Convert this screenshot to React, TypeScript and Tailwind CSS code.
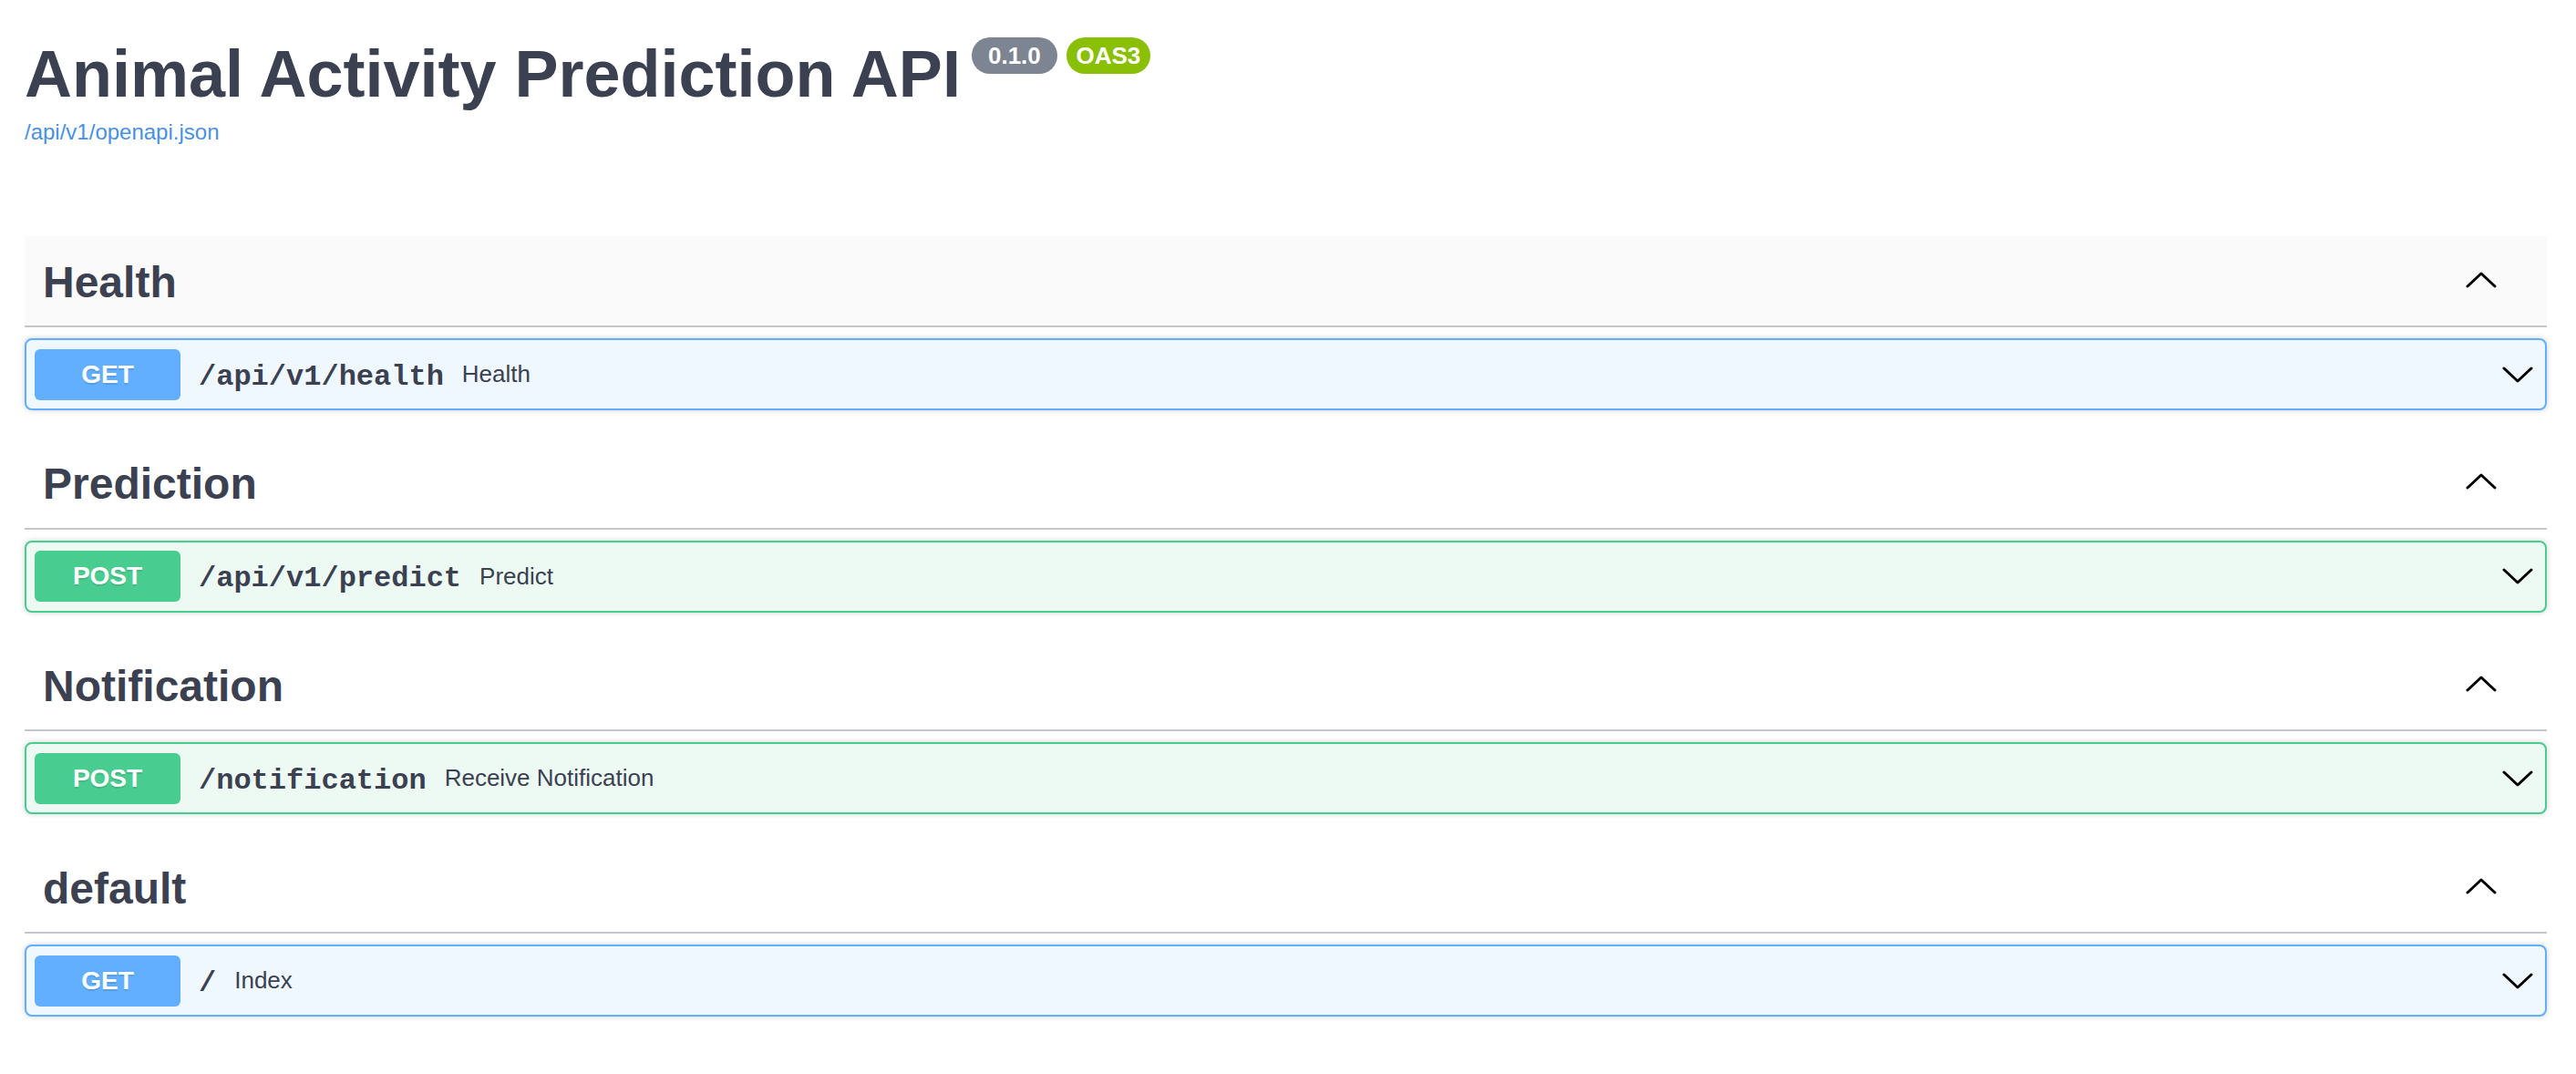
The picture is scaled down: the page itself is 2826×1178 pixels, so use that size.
const SANS = "font-['Liberation_Sans',Arial,sans-serif]";
const MONO = "font-['Liberation_Mono','Courier_New',monospace]";

type Method = "GET" | "POST";

interface Operation {
  method: Method;
  path: string;
  summary: string;
}

interface Tag {
  name: string;
  hovered?: boolean;
  ops: Operation[];
}

const TAGS: Tag[] = [
  { name: "Health", hovered: true, ops: [{ method: "GET", path: "/api/v1/health", summary: "Health" }] },
  { name: "Prediction", ops: [{ method: "POST", path: "/api/v1/predict", summary: "Predict" }] },
  { name: "Notification", ops: [{ method: "POST", path: "/notification", summary: "Receive Notification" }] },
  { name: "default", ops: [{ method: "GET", path: "/", summary: "Index" }] },
];

function Chevron({ up }: { up?: boolean }) {
  return (
    <svg width="34" height="18" viewBox="0 0 34 18" fill="none" aria-hidden="true">
      <polyline
        points={up ? "2,16 17,2 32,16" : "2,2 17,16 32,2"}
        stroke="#000"
        strokeWidth="3"
        strokeLinecap="round"
        strokeLinejoin="round"
      />
    </svg>
  );
}

function OpBlock({ op }: { op: Operation }) {
  const isGet = op.method === "GET";
  return (
    <div
      className={
        "flex h-[79px] items-center rounded-[8px] border-2 pl-[9px] pr-[13px] shadow-[0_0_6px_rgba(0,0,0,0.19)] " +
        (isGet ? "border-[#61affe] bg-[#eff7ff]" : "border-[#49cc90] bg-[#edfaf4]")
      }
    >
      <span
        className={
          "flex h-[56px] w-[160px] shrink-0 items-center justify-center rounded-[6px] text-[28px] font-bold text-white [text-shadow:0_2px_0_rgba(0,0,0,0.1)] " +
          SANS +
          (isGet ? " bg-[#61affe]" : " bg-[#49cc90]")
        }
      >
        {op.method}
      </span>
      <span className={"px-[20px] pt-[6px] text-[32px] font-bold text-[#3b4151] " + MONO}>{op.path}</span>
      <span className={"flex-1 text-[26px] text-[#3b4151] " + SANS}>{op.summary}</span>
      <Chevron />
    </div>
  );
}

function TagSection({ tag }: { tag: Tag }) {
  return (
    <div className="mb-[30.7px]">
      <div
        className={
          "flex h-[100px] items-center border-b-2 border-[#c4c6cb] pl-[20px] pr-[55px] " +
          (tag.hovered ? "bg-[#fafafa]" : "")
        }
      >
        <h3 className={"flex-1 pt-[3px] text-[48px] font-bold text-[#3b4151] " + SANS}>{tag.name}</h3>
        <span className="-mt-[3px]">
          <Chevron up />
        </span>
      </div>
      <div className="mt-[12px]">
        {tag.ops.map((op) => (
          <OpBlock key={op.path + op.method} op={op} />
        ))}
      </div>
    </div>
  );
}

export default function App() {
  return (
    <div className={"min-h-screen bg-white pl-[27px] pr-[32px] pt-[41px] " + SANS}>
      {/* Info */}
      <div className="flex items-start">
        <h2 className="text-[72px] font-bold leading-[80px] text-[#3b4151]">Animal Activity Prediction API</h2>
        <span className="ml-[12px] flex h-[40px] w-[94px] items-center justify-center rounded-full bg-[#7d8492] text-[26px] font-bold text-white">
          0.1.0
        </span>
        <span className="ml-[10px] flex h-[40px] w-[92px] items-center justify-center rounded-full bg-[#89bf04] text-[26px] font-bold text-white">
          OAS3
        </span>
      </div>
      <a className="mt-[10px] block text-[24px] leading-[27px] text-[#4990e2]" href="#">
        /api/v1/openapi.json
      </a>

      {/* Tags */}
      <div className="mt-[101px]">
        {TAGS.map((tag) => (
          <TagSection key={tag.name} tag={tag} />
        ))}
      </div>
    </div>
  );
}
